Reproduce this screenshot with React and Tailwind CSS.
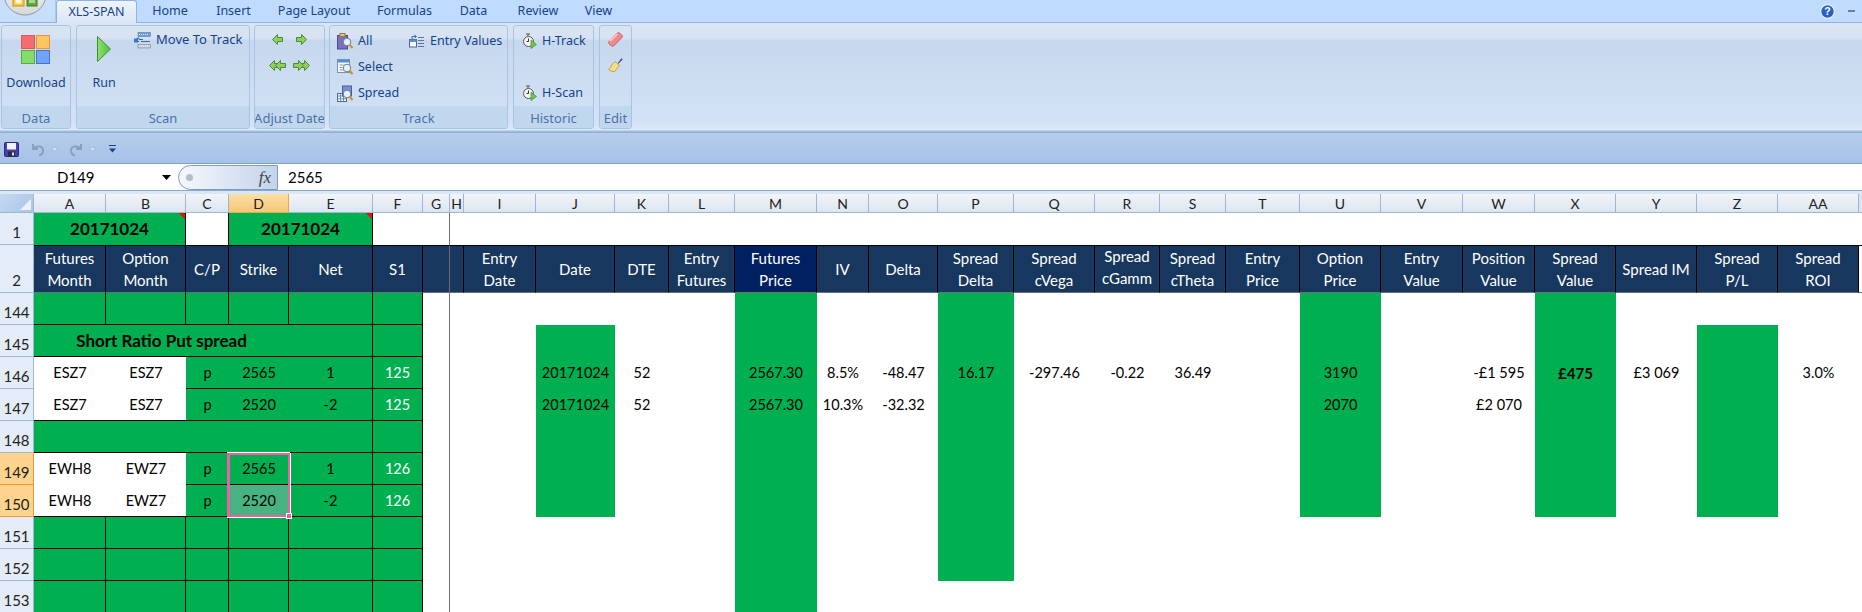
import React from 'react';

const COLS = ['A','B','C','D','E','F','G','H','I','J','K','L','M','N','O','P','Q','R','S','T','U','V','W','X','Y','Z','AA'];

const HEADERS = {
  A: ['Futures', 'Month'], B: ['Option', 'Month'], C: ['C/P'], D: ['Strike'], E: ['Net'], F: ['S1'], G: [], H: [],
  I: ['Entry', 'Date'], J: ['Date'], K: ['DTE'], L: ['Entry', 'Futures'], M: ['Futures', 'Price'], N: ['IV'], O: ['Delta'],
  P: ['Spread', 'Delta'], Q: ['Spread', 'cVega'], R: ['Spread', 'cGamm'], S: ['Spread', 'cTheta'], T: ['Entry', 'Price'],
  U: ['Option', 'Price'], V: ['Entry', 'Value'], W: ['Position', 'Value'], X: ['Spread', 'Value'], Y: ['Spread IM'],
  Z: ['Spread', 'P/L'], AA: ['Spread', 'ROI'],
};

// right hand block, which rows are filled green
const GREEN = {
  J: [145, 150], M: [144, 153], P: [144, 152], U: [144, 150], X: [144, 150], Z: [145, 150],
};

const VALUES = {
  146: { J: '20171024', K: '52', M: '2567.30', N: '8.5%', O: '-48.47', P: '16.17', Q: '-297.46', R: '-0.22', S: '36.49', U: '3190', W: '-£1 595', X: '£475', Y: '£3 069', AA: '3.0%' },
  147: { J: '20171024', K: '52', M: '2567.30', N: '10.3%', O: '-32.32', U: '2070', W: '£2 070' },
};

const RIGHT_COLS = COLS.slice(8);

const cellFont = { fontFamily: '"Lato", "Liberation Sans", sans-serif' };
const uiFont = { fontFamily: '"Noto Sans", "Liberation Sans", sans-serif' };

const Office = () => (
  <svg className="absolute left-0 top-0" width="56" height="18" viewBox="0 0 56 18">
    <defs>
      <linearGradient id="orb" x1="0" y1="0" x2="0" y2="1">
        <stop offset="0" stopColor="#ffffff" />
        <stop offset="1" stopColor="#d5d9d6" />
      </linearGradient>
    </defs>
    <circle cx="25" cy="-6" r="21" fill="url(#orb)" stroke="#8b9aa8" />
    <rect x="13" y="-4" width="11" height="10" fill="#f7c948" stroke="#d98a1c" />
    <rect x="15.500" y="-4" width="6" height="7.500" fill="#fff6d8" />
    <rect x="27" y="-4" width="10" height="10" fill="#63a83f" stroke="#3f7f2a" />
    <rect x="29" y="-4" width="6" height="7" fill="#a9d98e" />
  </svg>
);

const DownloadIcon = () => (
  <svg width="30" height="30" viewBox="0 0 30 30">
    <rect x="0.500" y="0.500" width="13" height="13" fill="#f96a6e" stroke="#d85a5a" />
    <rect x="15.500" y="0.500" width="13" height="13" fill="#ffc55f" stroke="#e5963a" />
    <rect x="0.500" y="15.500" width="13" height="13" fill="#84dd6a" stroke="#58a94a" />
    <rect x="15.500" y="15.500" width="13" height="13" fill="#6fa3ff" stroke="#4873c8" />
  </svg>
);

const PlayIcon = () => (
  <svg width="14" height="26" viewBox="0 0 14 26">
    <defs>
      <linearGradient id="play" x1="0" y1="0" x2="1" y2="0">
        <stop offset="0" stopColor="#8fe06a" />
        <stop offset="1" stopColor="#4cc13c" />
      </linearGradient>
    </defs>
    <path d="M0.500 0.500 L13.500 13 L0.500 25.500 Z" fill="url(#play)" stroke="#3d8f34" />
  </svg>
);

const MoveIcon = () => (
  <svg width="17" height="17" viewBox="0 0 17 17">
    <rect x="4" y="0.500" width="12.500" height="4" fill="#6f9bd8" stroke="#4a6fa8" strokeWidth="0.500" />
    <path d="M5 2.500h10" stroke="#dce8f8" strokeDasharray="1 1" />
    <rect x="4" y="12.500" width="12.500" height="3.500" fill="#c4ccd6" stroke="#6a7a8c" strokeWidth="0.500" />
    <path d="M5 14h10" stroke="#ffffff" strokeDasharray="1 1" />
    <path d="M0 7.500h3v-1.500h2v1.500h4M3 9.500h2M7 9.500h9" stroke="#3a68b0" strokeWidth="1" fill="none" />
    <rect x="0" y="6.500" width="4" height="4" fill="#3f73c4" />
  </svg>
);

const Arrow = ({ flip, double }) => (
  <svg width={double ? 17 : 11} height="11" viewBox={double ? '0 0 17 11' : '0 0 11 11'} className={flip ? '-scale-x-100' : ''}>
    <path d="M5.500 0.500 L0.500 5.500 L5.500 10.500 V7.500 H10.500 V3.500 H5.500 Z" fill="#8fd05a" stroke="#4a8a3a" />
    {double && <path d="M11.500 0.500 L6.500 5.500 L11.500 10.500 V7.500 H16.500 V3.500 H11.500 Z" fill="#8fd05a" stroke="#4a8a3a" />}
  </svg>
);

const Lens = () => (
  <>
    <circle cx="10" cy="9" r="3.800" fill="#e6f1fb" stroke="#6c7f93" />
    <path d="M12.800 12 L15.500 15" stroke="#d98a1c" strokeWidth="2" />
  </>
);

const AllIcon = () => (
  <svg width="16" height="17" viewBox="0 0 16 17">
    <rect x="0.500" y="2.500" width="10" height="13.500" fill="#7a6fc0" stroke="#4d4a8c" />
    <rect x="3" y="0.500" width="5" height="3" fill="#e4c874" stroke="#8c7a3a" />
    <Lens />
  </svg>
);

const SelectIcon = () => (
  <svg width="16" height="17" viewBox="0 0 16 17">
    <rect x="0.500" y="0.500" width="12" height="13" fill="#f4f7fb" stroke="#7d93ad" />
    <rect x="0.500" y="0.500" width="12" height="3" fill="#5f8ccc" />
    <path d="M2.500 6h4M2.500 8.500h3M2.500 11h4" stroke="#8a9db5" />
    <Lens />
  </svg>
);

const SpreadIcon = () => (
  <svg width="16" height="17" viewBox="0 0 16 17">
    <rect x="0.500" y="8.500" width="9" height="8" fill="#f0f4fa" stroke="#4d6d9c" />
    <path d="M3.500 8.500v8M6.500 8.500v8M0.500 11h9M0.500 13.800h9" stroke="#4d6d9c" strokeWidth="0.700" />
    <rect x="5.500" y="1" width="9" height="10" fill="#7a8ed0" stroke="#4d5a9c" />
    <Lens />
  </svg>
);

const EntryIcon = () => (
  <svg width="16" height="14" viewBox="0 0 16 14">
    <rect x="0.500" y="5.500" width="7" height="7.500" fill="#f4f7fb" stroke="#44689c" />
    <rect x="0.500" y="5.500" width="7" height="2.500" fill="#5f8ccc" />
    <path d="M3 5V2.500h4M5.500 1l2 1.500-2 1.500" stroke="#44689c" fill="none" />
    <path d="M9 3.500h6M9 6.500h6M9 9.500h6M9 12.500h6" stroke="#5a7598" />
  </svg>
);

const WatchIcon = () => (
  <svg width="14" height="16" viewBox="0 0 14 16">
    <path d="M3 1h4M5 1v2" stroke="#555" />
    <circle cx="5.500" cy="8.500" r="5" fill="#f4f4f0" stroke="#555" />
    <path d="M5.500 5.500v3h-2" stroke="#333" fill="none" />
    <path d="M8 7 L13.500 11.500 L8 15.500 Z" fill="#6fc648" stroke="#3d8f34" strokeWidth="0.700" />
  </svg>
);

const EraserIcon = () => (
  <svg width="15" height="15" viewBox="0 0 15 15">
    <path d="M1 9.500 L9.500 1 Q10.500 0.200 11.500 1 L14 3.500 Q14.800 4.500 14 5.500 L5.500 14 Q4.500 14.800 3.500 14 L1 11.500 Q0.200 10.500 1 9.500 Z" fill="#f08a8a" stroke="#c85a5a" />
    <path d="M2 9 L9.500 2" stroke="#fbd0d0" strokeWidth="1.500" />
  </svg>
);

const BrushIcon = () => (
  <svg width="15" height="15" viewBox="0 0 15 15">
    <path d="M10 5 L13.500 0.500 L14.500 1.500 L10.500 5.500 Z" fill="#5a62a8" stroke="#3d4480" strokeWidth="0.500" />
    <path d="M7 3.500 L11.500 7.500 L6.500 13.500 Q3 14 0.500 11.500 Q3.500 9.500 3.500 7 Z" fill="#f6de82" stroke="#a8893a" strokeWidth="0.700" />
  </svg>
);

const Group = ({ title, className, children }) => (
  <div className={`flex flex-col rounded-[3px] border border-[#a9c3e2] overflow-hidden ${className}`}>
    <div className="h-[84px] relative">{children}</div>
    <div className="flex-1 flex items-center justify-center pt-[3px] bg-[#c1d7ee] text-[#4b71a8] text-[13px] whitespace-nowrap">{title}</div>
  </div>
);

const RibbonItem = ({ icon, label, className = 'text-[12.5px]' }) => (
  <div className={`flex items-center gap-[5px] h-[18px] text-[#15428b] whitespace-nowrap ${className}`}>
    {icon}
    <span>{label}</span>
  </div>
);

const TABS = [
  ['Home', 'w-[66px]'], ['Insert', 'w-[61px]'], ['Page Layout', 'w-[100px]'], ['Formulas', 'w-[81px]'],
  ['Data', 'w-[57px]'], ['Review', 'w-[72px]'], ['View', 'w-[49px]'],
];

const Ribbon = () => (
  <div style={uiFont}>
    <div className="relative h-[23px] flex bg-[#bfdbff] border-b border-[#8db2e3]">
      <div className="w-[56px] h-[22px] bg-[#c8dffc] border-r border-[#a9c9f0] rounded-br-[3px]" />
      <Office />
      <div className="w-[81px] h-[23px] flex items-center justify-center bg-[linear-gradient(#eef4fc,#dbe6f4)] border-x border-t border-[#8db2e3] rounded-t-[3px] text-[#15428b] text-[12.5px] relative">XLS-SPAN</div>
      {TABS.map(([name, w]) => (
        <div key={name} className={`${w} flex items-center justify-center text-[#15428b] text-[12.5px]`}>{name}</div>
      ))}
      <div className="ml-auto flex items-center gap-[13px] pr-[7px]">
        <svg width="15" height="15" viewBox="0 0 15 15">
          <circle cx="7.500" cy="7.500" r="6.800" fill="#2a62c4" stroke="#e8f0fc" strokeWidth="1.200" />
          <text x="7.500" y="11.200" textAnchor="middle" fontSize="10.500" fontWeight="700" fill="#ffffff" fontFamily="Liberation Sans">?</text>
        </svg>
        <div className="w-[7px] h-[2px] bg-[#6f7f92]" />
      </div>
    </div>
    <div className="h-[110px] flex gap-[5px] pl-[1px] pt-[2px] bg-[linear-gradient(#dbe6f4_0%,#d6e2f2_14%,#c6d8ee_16%,#d3e2f5_90%,#dbe8f8_97%,#8fb2d8_99%,#8fb2d8_100%)]">
      <Group title="Data" className="w-[70px] h-[104px]">
        <div className="flex flex-col items-center pt-[9px] gap-[9px] text-[#15428b] text-[12.5px]">
          <DownloadIcon />
          <span>Download</span>
        </div>
      </Group>
      <Group title="Scan" className="w-[174px] h-[104px]">
        <div className="flex h-full">
          <div className="w-[54px] flex flex-col items-center pt-[10px] gap-[12px] text-[#15428b] text-[12.5px]">
            <PlayIcon />
            <span>Run</span>
          </div>
          <RibbonItem icon={<MoveIcon />} label="Move To Track" className="mt-[5px] ml-[3px] text-[13px]" />
        </div>
      </Group>
      <Group title="Adjust Date" className="w-[71px] h-[104px] ml-[-1px]">
        <div className="grid grid-cols-2 justify-items-center gap-y-[15px] pt-[8px] px-[11px]">
          <Arrow />
          <Arrow flip />
          <Arrow double />
          <Arrow double flip />
        </div>
      </Group>
      <Group title="Track" className="w-[179px] h-[104px] ml-[-1px]">
        <div className="grid grid-cols-[72px_1fr] gap-y-[8px] pt-[6px] pl-[7px]">
          <RibbonItem icon={<AllIcon />} label="All" />
          <RibbonItem icon={<EntryIcon />} label="Entry Values" />
          <RibbonItem icon={<SelectIcon />} label="Select" />
          <div />
          <RibbonItem icon={<SpreadIcon />} label="Spread" />
        </div>
      </Group>
      <Group title="Historic" className="w-[81px] h-[104px]">
        <div className="flex flex-col justify-between h-[76px] pt-[6px] pl-[9px]">
          <RibbonItem icon={<WatchIcon />} label="H-Track" />
          <RibbonItem icon={<WatchIcon />} label="H-Scan" />
        </div>
      </Group>
      <Group title="Edit" className="w-[33px] h-[104px]">
        <div className="flex flex-col items-center gap-[11px] pt-[6px]">
          <EraserIcon />
          <BrushIcon />
        </div>
      </Group>
    </div>
    <div className="h-[31px] flex items-center pl-[4px] pt-[3px] gap-[4px] bg-[linear-gradient(#b6cdec,#a6c2e7)] border-b border-[#7f9fc6]">
      <svg width="15" height="15" viewBox="0 0 15 15">
        <rect x="0.500" y="0.500" width="14" height="14" rx="1" fill="#4a3fb0" stroke="#2b2a78" />
        <rect x="3" y="1" width="9" height="6.500" fill="#eef2fb" />
        <rect x="4" y="9.500" width="7" height="5" fill="#2d2d3a" />
        <rect x="8" y="10.500" width="2" height="3" fill="#e8e8e8" />
      </svg>
      <svg className="ml-[8px]" width="14" height="14" viewBox="0 0 14 14">
        <path d="M2 1v5h5M2.500 5.500C5 2.500 12 2.500 12 7.500c0 3-2 4.500-4 5" fill="none" stroke="#8aa0bd" strokeWidth="2" />
      </svg>
      <svg width="7" height="5" viewBox="0 0 7 5" className="ml-[2px]"><path d="M0.500 0.500h6l-3 4z" fill="#dce6f3" stroke="#93a7c0" strokeWidth="0.500" /></svg>
      <svg className="ml-[7px]" width="14" height="14" viewBox="0 0 14 14">
        <path d="M12 1v5H7M11.500 5.500C9 2.500 2 2.500 2 7.500c0 3 2 4.500 4 5" fill="none" stroke="#8aa0bd" strokeWidth="2" />
      </svg>
      <svg width="7" height="5" viewBox="0 0 7 5" className="ml-[2px]"><path d="M0.500 0.500h6l-3 4z" fill="#dce6f3" stroke="#93a7c0" strokeWidth="0.500" /></svg>
      <svg className="ml-[9px]" width="7" height="9" viewBox="0 0 7 9"><path d="M0 0.500h7" stroke="#1e3f86" /><path d="M0 3.500h7l-3.500 4z" fill="#1e3f86" /></svg>
    </div>
  </div>
);

const FormulaBar = () => (
  <div className="h-[27px] flex items-center pt-[1px] bg-white border-b border-[#8aa8cc] text-black text-[15px]" style={cellFont}>
    <div className="w-[178px] flex items-center pl-[57px]">
      <span>D149</span>
      <svg className="ml-[67px]" width="9" height="5" viewBox="0 0 9 5"><path d="M0 0h9L4.500 5z" fill="#000" /></svg>
    </div>
    <div className="relative w-[100px] h-[25px] flex items-center justify-end pr-[6px] rounded-l-[13px] border border-[#7d9cc4] bg-[linear-gradient(90deg,#f5f8fd,#c3d4ea)]">
      <div className="absolute left-[7px] top-[8px] w-[7px] h-[7px] rounded-full bg-[#b8bec6]" />
      <span className="italic text-[#444] text-[17px] leading-none" style={{ fontFamily: '"Liberation Serif", serif' }}>fx</span>
    </div>
    <span className="pl-[10px]">2565</span>
  </div>
);

const colCell = (c) => {
  if (c === 'D') return 'bg-[linear-gradient(#fbe0a6,#f6c676)] border-r border-[#e8a94e]';
  if (c === 'G') return 'bg-[linear-gradient(#f2f5fa,#dbe5f1)] border-r border-[#6e6e6e]';
  return 'bg-[linear-gradient(#f2f5fa,#dbe5f1)] border-r border-[#9eb6ce]';
};

const RowHead = ({ n, active }) => (
  <div className={`flex items-end justify-center pb-[3px] border-b text-[15px] leading-[18px] text-[#222] border-r ${active ? 'bg-[#ffd58d] border-[#f29536]' : 'bg-[#e4ecf7] border-[#9eb6ce]'}`}>{n}</div>
);

const Cell = ({ className = '', children }) => (
  <div className={`flex items-center justify-center whitespace-nowrap ${className}`}>{children}</div>
);

const LINE = 'border-r border-b border-black';

const TRADES = {
  146: ['ESZ7', 'ESZ7', 'p', '2565', '1', '125'],
  147: ['ESZ7', 'ESZ7', 'p', '2520', '-2', '125'],
  149: ['EWH8', 'EWZ7', 'p', '2565', '1', '126'],
  150: ['EWH8', 'EWZ7', 'p', '2520', '-2', '126'],
};

// cells of the frozen block, A to F, for one row
const leftCells = (n) => {
  const tail = (net, s1) => (
    <>
      <Cell className={`bg-[#00b050] ${LINE}`}>{net}</Cell>
      <Cell className={`bg-[#00b050] ${LINE} text-white`}>{s1}</Cell>
    </>
  );
  if (n === 145) {
    return (
      <>
        <Cell className="col-span-4 bg-[#00b050] border-b border-black font-bold text-[17px]">Short Ratio Put spread</Cell>
        {tail()}
      </>
    );
  }
  if (n === 148) {
    return (
      <>
        <Cell className="col-span-4 bg-[#00b050] border-b border-black" />
        {tail()}
      </>
    );
  }
  if (TRADES[n]) {
    const t = TRADES[n];
    const under = n === 147 || n === 150 ? 'border-b border-black' : '';
    return (
      <>
        <Cell className={`bg-white ${under}`}>{t[0]}</Cell>
        <Cell className={`bg-white ${under}`}>{t[1]}</Cell>
        <Cell className="bg-[#00b050] border-b border-black">{t[2]}</Cell>
        <Cell className={`relative border-b border-black ${n === 150 ? 'bg-[#47b380]' : 'bg-[#00b050]'}`}>
          {t[3]}
          {n === 149 && (
            <div className="absolute z-10 left-[-2px] top-0 w-[63px] h-[64px] border-l-[3px] border-t-[2px] border-b-[2px] border-r-[2px] border-[#ee5fa7] shadow-[0_-1px_0_#fff,1px_0_0_#fff,0_1px_0_#fff]">
              <div className="absolute right-[-4px] bottom-[-4px] w-[6px] h-[6px] bg-[#ee5fa7] border border-white" />
            </div>
          )}
        </Cell>
        {tail(t[4], t[5])}
      </>
    );
  }
  return ['A', 'B', 'C', 'D', 'E', 'F'].map((c) => <Cell key={c} className={`bg-[#00b050] ${LINE}`} />);
};

const isGreen = (c, n) => GREEN[c] && n >= GREEN[c][0] && n <= GREEN[c][1];

const Sheet = () => {
  const rows = [144, 145, 146, 147, 148, 149, 150, 151, 152, 153];
  return (
    <div
      className="grid grid-cols-[34px_72px_80px_43px_60px_84px_50px_27px_14px_72px_79px_54px_66px_82px_52px_69px_76px_81px_65px_66px_74px_81px_82px_72px_81px_81px_81px_81px_3px] grid-rows-[19px_32px_48px_repeat(10,32px)] text-[14.5px] text-black"
      style={cellFont}
    >
      {/* column letters */}
      <div className="relative bg-[linear-gradient(135deg,#c4d8f0,#a9c5e8)] border-r border-b border-[#9eb6ce]">
        <svg className="absolute right-[2px] bottom-[2px]" width="11" height="11" viewBox="0 0 11 11"><path d="M11 0v11H0z" fill="#eef2f8" /></svg>
      </div>
      {COLS.map((c) => (
        <div key={c} className={`flex items-center justify-center border-b border-[#9eb6ce] text-[14px] text-[#222] ${colCell(c)}`}>{c}</div>
      ))}
      <div className="bg-[#dbe5f1] border-b border-[#9eb6ce]" />

      {/* row 1 */}
      <RowHead n={1} />
      <Cell className="relative col-span-2 bg-[#00b050] border-r border-black font-bold text-[17px]">
        20171024
        <div className="absolute right-0 top-0 w-0 h-0 border-t-[6px] border-l-[6px] border-t-[#ff0000] border-l-transparent" />
      </Cell>
      <Cell className="bg-white border-r border-black" />
      <Cell className="relative col-span-2 bg-[#00b050] border-r border-black font-bold text-[17px]">
        20171024
        <div className="absolute right-0 top-0 w-0 h-0 border-t-[6px] border-l-[6px] border-t-[#ff0000] border-l-transparent" />
      </Cell>
      <Cell />
      <Cell className="border-r border-[#6e6e6e]" />
      {COLS.slice(7).map((c) => <Cell key={c} />)}
      <Cell />

      {/* row 2, titles */}
      <RowHead n={2} />
      {COLS.map((c) => (
        <div
          key={c}
          className={`flex flex-col items-center justify-center whitespace-nowrap border-t border-t-black border-b border-b-[#6e6e6e] border-r text-white text-[15px] leading-[22px] ${c === 'G' ? 'border-r-[#6e6e6e]' : 'border-r-black'} ${c === 'M' ? 'bg-[#002060]' : 'bg-[#17375e]'} ${c === 'R' ? 'pb-[4px]' : ''}`}
        >
          {HEADERS[c].map((line) => <span key={line}>{line}</span>)}
        </div>
      ))}
      <div className="border-t border-t-black border-b border-b-[#6e6e6e]" />

      {/* data rows */}
      {rows.map((n) => (
        <React.Fragment key={n}>
          <RowHead n={n} active={n === 149 || n === 150} />
          {leftCells(n)}
          <Cell className="border-r border-[#6e6e6e]" />
          <Cell />
          {RIGHT_COLS.map((c) => (
            <Cell key={c} className={`${isGreen(c, n) ? 'bg-[#00b050]' : ''} ${c === 'X' ? 'font-bold text-[15px]' : ''}`}>
              {VALUES[n] && VALUES[n][c]}
            </Cell>
          ))}
          <Cell />
        </React.Fragment>
      ))}
    </div>
  );
};

export default function App() {
  return (
    <div className="w-[1862px] h-[612px] overflow-hidden bg-white">
      <Ribbon />
      <FormulaBar />
      <div className="h-[3px] bg-[#dbe7f5]" />
      <Sheet />
    </div>
  );
}
